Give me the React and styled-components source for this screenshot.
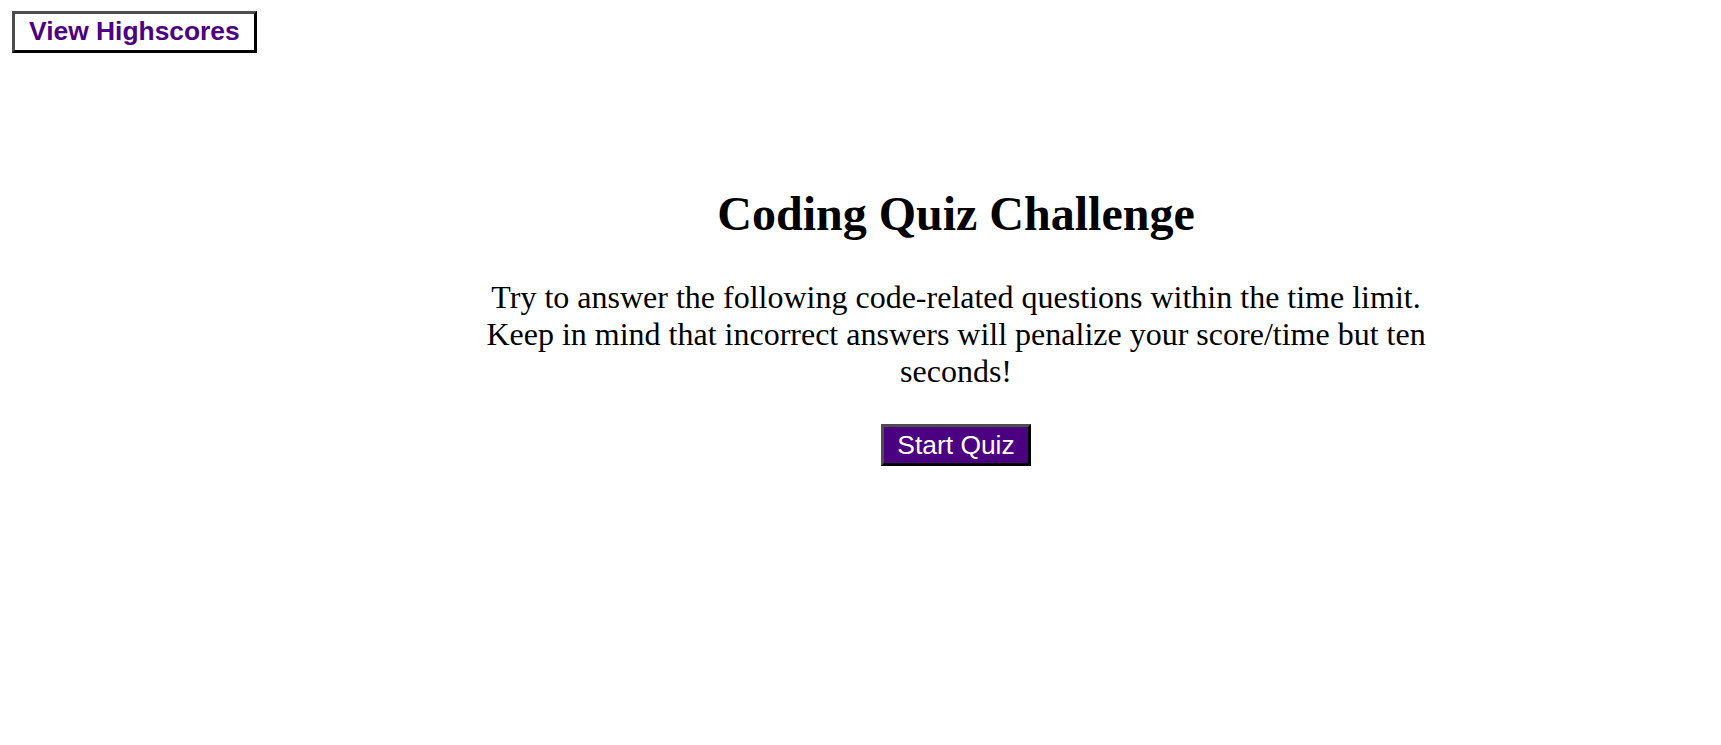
import React from "react";
import styled, { createGlobalStyle } from "styled-components";

const GlobalStyle = createGlobalStyle`
  body {
    margin: 0;
    background: #fff;
    font-family: "Liberation Serif", "Times New Roman", serif;
    color: #000;
  }
`;

const Header = styled.header`
  display: flex;
  align-items: flex-start;
  padding: 11px 0 0 12px;
`;

const Button = styled.button`
  box-sizing: border-box;
  height: 42px;
  margin: 0;
  padding: 0 ${(props) => props.$padX}px ${(props) => props.$lift}px;
  border: 3px solid;
  border-color: #4d4d4d #000 #000 #4d4d4d;
  border-radius: 0;
  font-family: "Liberation Sans", Arial, sans-serif;
  font-size: 26.4px;
  font-weight: ${(props) => (props.$bold ? 700 : 400)};
  background: ${(props) => (props.$filled ? "#4b0082" : "#fff")};
  color: ${(props) => (props.$filled ? "#fff" : "#4b0082")};
  cursor: pointer;
`;

const Main = styled.main`
  display: flex;
  justify-content: center;
  padding: 133px 0 0 191px;
`;

const Content = styled.section`
  width: 960px;
  text-align: center;
`;

const Title = styled.h1`
  margin: 0 0 38px;
  font-size: 48px;
  font-weight: 700;
`;

const Intro = styled.p`
  margin: 0 0 34px;
  font-size: 32px;
`;

const App = () => {
  return (
    <>
      <GlobalStyle />
      <Header>
        <Button $bold $padX={14} $lift={2}>
          View Highscores
        </Button>
      </Header>
      <Main>
        <Content>
          <Title>Coding Quiz Challenge</Title>
          <Intro>
            Try to answer the following code-related questions within the time
            limit. Keep in mind that incorrect answers will penalize your
            score/time but ten seconds!
          </Intro>
          <Button $filled $padX={13} $lift={0}>
            Start Quiz
          </Button>
        </Content>
      </Main>
    </>
  );
};

export default App;
